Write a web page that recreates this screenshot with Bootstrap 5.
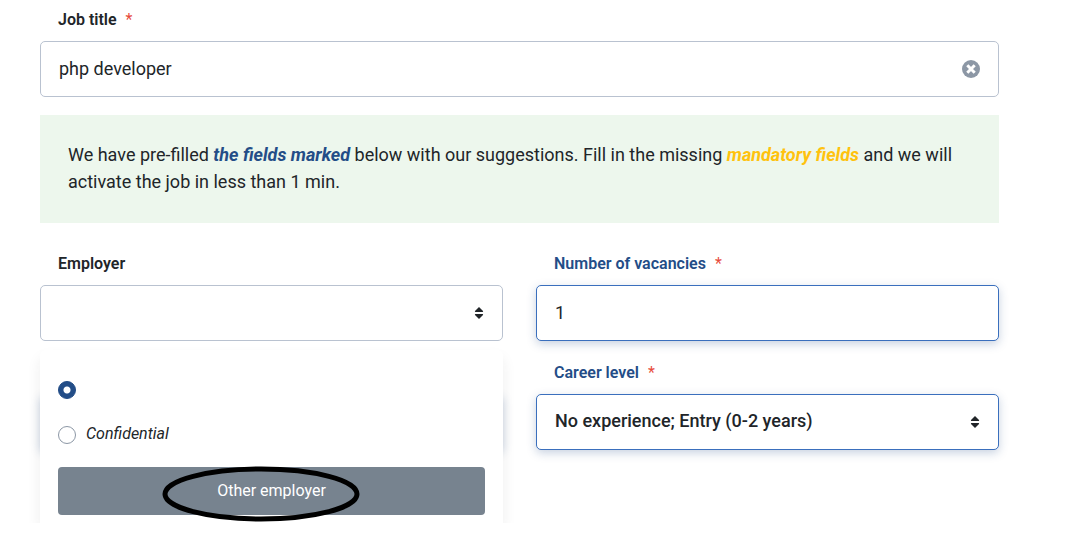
<!DOCTYPE html>
<html lang="en">
<head>
<meta charset="utf-8">
<meta name="viewport" content="width=device-width, initial-scale=1">
<title>Post a job</title>
<link href="https://cdn.jsdelivr.net/npm/bootstrap@5.3.0/dist/css/bootstrap.min.css" rel="stylesheet">
<style>
  body { font-family: Roboto, "Liberation Sans", sans-serif; font-size: 18px; line-height: 27px; color: #212529; background: #fff; }
  .job-form { padding: 8px 69px 0 40px; overflow: hidden; }
  .field-label { display: block; font-size: 16px; line-height: 24px; font-weight: 600; padding-left: 18px; margin-bottom: 9px; }
  .field-label .req { color: #e74c3c; font-weight: 400; margin-left: 5px; }
  .field-box { height: 56px; font-size: 18px; line-height: 27px; color: #212529; border: 1px solid #b9c2d0; border-radius: 5px; padding: 0 44px 2px 18px; background-color: #fff; }
  select.field-box { padding-bottom: 4px; }
  .suggested .field-label { color: #234d87; }
  .suggested .field-box, .covered-box { border-color: #3a6fbd; box-shadow: 0 3px 10px rgba(35, 77, 135, .25); }
  .field-icon { position: absolute; right: 19px; top: 0; height: 56px; display: flex; align-items: center; pointer-events: none; }
  .clear-btn { pointer-events: auto; border: 0; padding: 0; background: none; line-height: 0; }
  .hint { background: #edf7ed; padding: 26px 28px 28px; margin: 18px 0 29px; }
  .hint .marked { color: #234d87; }
  .hint .mandatory { color: #ffc20e; }
  .field-grid { --bs-gutter-x: 33px; }
  .menu-wrap { position: relative; margin-top: 9px; }
  .covered-box { position: absolute; left: 0; right: 0; top: 44px; height: 56px; border-radius: 5px; }
  .employer-menu { position: relative; background: #fff; border-radius: 6px 6px 0 0; padding: 31px 18px 8px; box-shadow: 0 8px 14px rgba(33, 37, 41, .08); }
  .employer-menu .form-check-input { width: 18px; height: 18px; margin: 0; border: 1px solid #8c97a5; flex: none; }
  .employer-menu .form-check-input:checked { background-color: #234d87; border-color: #234d87; background-image: radial-gradient(circle, #fff 3px, transparent 4px); }
  .option-row { display: flex; align-items: center; gap: 10px; margin-bottom: 20px; }
  .option-text { font-size: 16px; line-height: 22px; font-style: italic; padding-bottom: 2px; }
  .other-btn { position: relative; height: 48px; border: 0; border-radius: 4px; background: #77838f; color: #fff; font-size: 16px; line-height: 24px; padding: 0; }
  .circled { position: absolute; left: 50%; top: -2px; margin-left: -111px; overflow: visible; pointer-events: none; }
</style>
</head>
<body>
<form class="job-form">
  <div>
    <label class="field-label" for="title">Job title <span class="req">*</span></label>
    <div class="position-relative">
      <input id="title" type="text" class="form-control field-box" value="php developer">
      <span class="field-icon">
        <button type="button" class="clear-btn" aria-label="Clear">
          <svg width="18" height="18" viewBox="0 0 18 18"><circle cx="9" cy="9" r="9" fill="#8c97a5"/><path d="M5.3 5.3l7.4 7.4M12.7 5.3l-7.4 7.4" stroke="#fff" stroke-width="3"/></svg>
        </button>
      </span>
    </div>
  </div>

  <p class="hint">We have pre-filled <b class="marked fst-italic">the fields marked</b> below with our suggestions. Fill in the missing <b class="mandatory fst-italic">mandatory fields</b> and we will activate the job in less than 1 min.</p>

  <div class="row field-grid">
    <div class="col-6">
      <label class="field-label" for="employer">Employer</label>
      <div class="position-relative">
        <select id="employer" class="form-control field-box"><option></option></select>
        <span class="field-icon"><svg width="10" height="12" viewBox="0 0 10 12" fill="#212529"><path d="M5 0L9 4Q9.500 5 8.500 5H1.500Q.5 5 1 4ZM5 12L9 8Q9.500 7 8.500 7H1.500Q.5 7 1 8Z"/></svg></span>
      </div>
      <div class="menu-wrap">
        <div class="covered-box"></div>
        <div class="employer-menu">
          <div class="option-row">
            <input class="form-check-input" type="radio" name="who" id="who-self" aria-label="Employer" checked>
          </div>
          <div class="option-row pt-1">
            <input class="form-check-input" type="radio" name="who" id="who-conf">
            <label class="option-text" for="who-conf">Confidential</label>
          </div>
          <button type="button" class="btn other-btn w-100">Other employer
            <svg class="circled" width="200" height="58" viewBox="0 0 200 58"><ellipse cx="100" cy="29" rx="96" ry="25" fill="none" stroke="#000" stroke-width="5"/></svg>
          </button>
        </div>
      </div>
    </div>

    <div class="col-6 suggested">
      <label class="field-label" for="vacancies">Number of vacancies <span class="req">*</span></label>
      <input id="vacancies" type="text" inputmode="numeric" class="form-control field-box mb-3" value="1">
      <label class="field-label pt-1" for="level">Career level <span class="req">*</span></label>
      <div class="position-relative">
        <select id="level" class="form-control field-box fw-medium"><option>No experience; Entry (0-2 years)</option></select>
        <span class="field-icon"><svg width="10" height="12" viewBox="0 0 10 12" fill="#212529"><path d="M5 0L9 4Q9.500 5 8.500 5H1.500Q.5 5 1 4ZM5 12L9 8Q9.500 7 8.500 7H1.500Q.5 7 1 8Z"/></svg></span>
      </div>
    </div>
  </div>
</form>
<script src="https://cdn.jsdelivr.net/npm/bootstrap@5.3.0/dist/js/bootstrap.bundle.min.js"></script>
</body>
</html>
